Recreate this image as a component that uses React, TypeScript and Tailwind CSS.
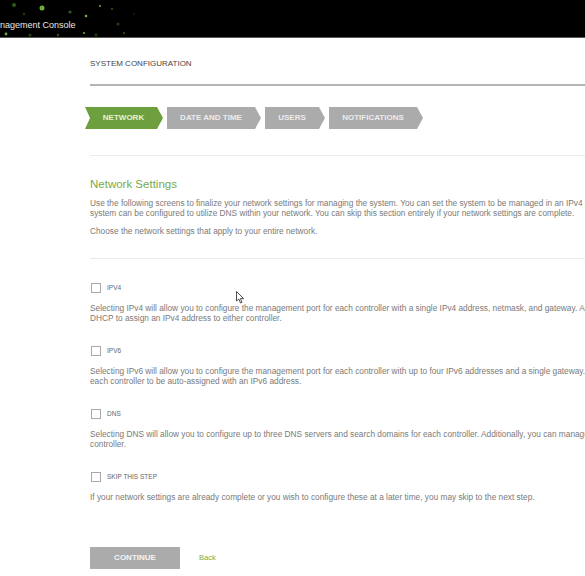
import React from "react";

const font = "font-['Liberation_Sans',Arial,sans-serif]";

const steps = [
  { label: "NETWORK", width: "w-[78px]", active: true },
  { label: "DATE AND TIME", width: "w-[94px]", active: false },
  { label: "USERS", width: "w-[60px]", active: false },
  { label: "NOTIFICATIONS", width: "w-[94px]", active: false },
];

const options = [
  {
    label: "IPV4",
    lines: [
      "Selecting IPv4 will allow you to configure the management port for each controller with a single IPv4 address, netmask, and gateway. Additionally, you can use",
      "DHCP to assign an IPv4 address to either controller.",
    ],
  },
  {
    label: "IPV6",
    lines: [
      "Selecting IPv6 will allow you to configure the management port for each controller with up to four IPv6 addresses and a single gateway. Additionally, you can allow",
      "each controller to be auto-assigned with an IPv6 address.",
    ],
  },
  {
    label: "DNS",
    lines: [
      "Selecting DNS will allow you to configure up to three DNS servers and search domains for each controller. Additionally, you can manage the DNS settings for each",
      "controller.",
    ],
  },
  {
    label: "SKIP THIS STEP",
    lines: [
      "If your network settings are already complete or you wish to configure these at a later time, you may skip to the next step.",
    ],
  },
];

// green speckles behind the console title
const dots = [
  [14, 5, 2], [42, 8, 2.5], [24, 14, 1.2], [70, 12, 1.6], [86, 16, 1.3],
  [118, 24, 1.6], [112, 9, 1], [6, 34, 1.4], [30, 35, 1.6], [58, 35, 1.2], [84, 33, 1],
  [96, 35, 1.4], [124, 33, 1.1], [100, 6, 1], [134, 14, 0.8],
];

const Header = () => (
  <div className="relative h-[38px] border-b border-[#5a5a5a] bg-black">
    <svg className="absolute left-0 top-0" width="150" height="38">
      {dots.map(([x, y, r], i) => (
        <circle key={i} cx={x} cy={y} r={r} fill={i % 3 === 0 ? "#2f5a18" : i % 3 === 1 ? "#6fae3e" : "#1f3f10"} />
      ))}
    </svg>
    <div className="absolute left-0 top-[20px] text-[9px] leading-[10px] text-[#e8e8e8]">nagement Console</div>
  </div>
);

const Steps = () => (
  <div className="-ml-[5px] mt-[21px] flex h-[22px] gap-[4px]">
    {steps.map((s) => (
      <div
        key={s.label}
        className={`${s.width} flex items-center justify-center text-[8px] font-bold ${
          s.active
            ? "bg-[#6e9f3f] pl-[4px] pr-[5px] text-[#e4f2d6] [clip-path:polygon(0_0,calc(100%_-_6px)_0,100%_50%,calc(100%_-_6px)_100%,0_100%,5px_50%)]"
            : "bg-[#ababab] pr-[6px] text-[#ececec] [clip-path:polygon(0_0,calc(100%_-_6px)_0,100%_50%,calc(100%_-_6px)_100%,0_100%)]"
        }`}
      >
        {s.label}
      </div>
    ))}
  </div>
);

const Option = ({ label, lines, first }: { label: string; lines: string[]; first: boolean }) => (
  <div className={first ? "mt-[23px]" : "mt-[22px]"}>
    <div className="flex h-[12px] items-center gap-[6px] pl-px">
      <div className="h-[10px] w-[10px] border border-[#a8a8a8] bg-white" />
      <span className="text-[6.5px] text-[#666]">{label}</span>
    </div>
    <div className="mt-[9px] whitespace-nowrap text-[8.3px] leading-[10px] text-[#7a7a7a]">
      {lines.map((l) => (
        <div key={l}>{l}</div>
      ))}
    </div>
  </div>
);

const App = () => {
  return (
    <div className={`${font} relative h-[576px] w-full overflow-hidden bg-white`}>
      <Header />
      <div className="ml-[90px] w-[760px]">
        <div className="mt-[21px] h-[10px] text-[8px] leading-[10px] text-[#444]">SYSTEM CONFIGURATION</div>
        <div className="mt-[15px] h-[2px] bg-[#b4b4b4]" />
        <Steps />
        <div className="mt-[26px] h-px bg-[#ebebeb]" />
        <div className="mt-[21px] text-[11.5px] leading-[14px] text-[#78a94a]">Network Settings</div>
        <div className="mt-[7px] whitespace-nowrap text-[8.3px] leading-[10px] text-[#7a7a7a]">
          <div>
            Use the following screens to finalize your network settings for managing the system. You can set the system to be managed in an IPv4 network, an IPv6 network, or both. The
          </div>
          <div>
            system can be configured to utilize DNS within your network. You can skip this section entirely if your network settings are complete.
          </div>
        </div>
        <div className="mt-[8px] text-[8.3px] leading-[10px] text-[#7a7a7a]">
          Choose the network settings that apply to your entire network.
        </div>
        <div className="mt-[22px] h-px bg-[#ebebeb]" />
        {options.map((o, i) => (
          <Option key={o.label} label={o.label} lines={o.lines} first={i === 0} />
        ))}
        <div className="mt-[45px] flex items-center gap-[19px]">
          <button className="h-[22px] w-[90px] bg-[#ababab] text-[8px] font-bold text-[#f4f4f4]">CONTINUE</button>
          <span className="text-[7.5px] text-[#7aab4a]">Back</span>
        </div>
      </div>
      <svg className="absolute left-[236px] top-[291px]" width="9" height="13" viewBox="0 0 9 13">
        <path d="M0.5 0.5 L0.5 10 L2.8 8 L4.5 12 L6 11.3 L4.4 7.6 L7.6 7.6 Z" fill="white" stroke="#222" strokeWidth="0.8" />
      </svg>
    </div>
  );
};

export default App;
